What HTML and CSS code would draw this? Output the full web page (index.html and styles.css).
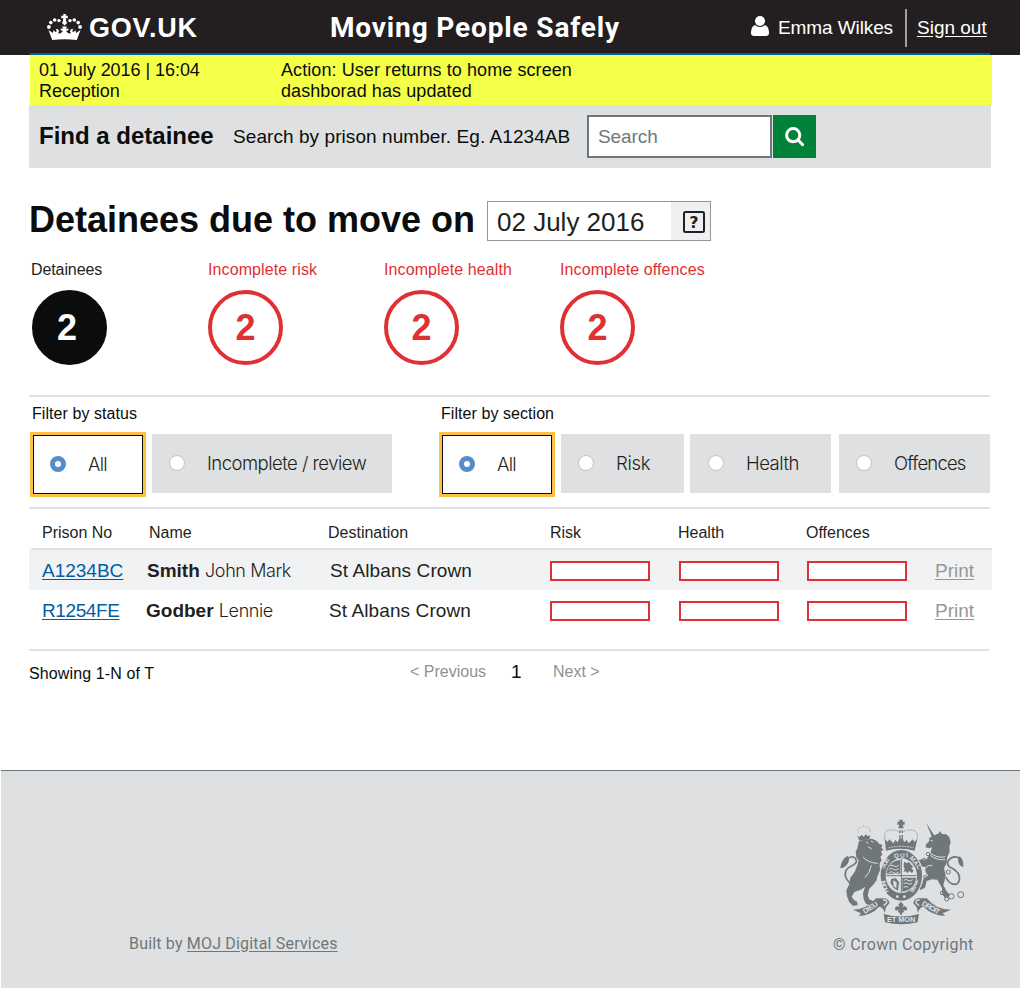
FILE: index.html
```html
<!DOCTYPE html>
<html lang="en">
<head>
<meta charset="utf-8">
<title>Moving People Safely</title>
<link rel="stylesheet" href="styles.css">
</head>
<body>
<header class="masthead">
  <svg class="crown" viewBox="0 0 35 26" width="35" height="26">
    <g fill="#fff">
      <path d="M16.300 0h2.500v1.800h2v2.400h-2l.3 2.500 1 2.300-2.500 2.500L15 9l1-2.300.3-2.500h-2V1.800h2z"/>
      <circle cx="12" cy="6.600" r="1.700"/><circle cx="23" cy="6.600" r="1.700"/>
      <circle cx="7.700" cy="6" r="1.800"/><circle cx="27.300" cy="6" r="1.800"/>
      <circle cx="3.800" cy="8.600" r="1.800"/><circle cx="31.200" cy="8.600" r="1.800"/>
      <circle cx="1.900" cy="13" r="1.900"/><circle cx="33.100" cy="13" r="1.900"/>
      <path d="M1.500 16l4.300 3 .8-2.800 2.200 2.100 1-1.200-1.200-2.300 2.900.6.400 2.300-1 1.900 2.900-.4 2.200-2.200-2.400-.8v-1.800l2.200.6-.6-2.600h4.600l-.6 2.600 2.200-.6v1.800l-2.400.8 2.200 2.200 2.900.4-1-1.900.4-2.300 2.900-.6-1.200 2.300 1 1.200 2.200-2.100.8 2.800 4.300-3-3.700 10q-12.300-1.400-24.600 0z"/>
    </g>
  </svg>
  <span class="govuk">GOV.UK</span>
  <span class="service">Moving People Safely</span>
  <svg class="user-icon" viewBox="0 0 18 20" width="18" height="20"><circle cx="9" cy="5" r="5" fill="#fff"/><path d="M4 9q5 4 10 0 4 1.500 4 8 0 3-3 3H3q-3 0-3-3 0-6.500 4-8z" fill="#fff"/></svg>
  <span class="user-name">Emma Wilkes</span>
  <a class="sign-out" href="#">Sign out</a>
</header>

<div class="notice">
  <p class="notice-when">01 July 2016 | 16:04<br>Reception</p>
  <p class="notice-action">Action: User returns to home screen<br>dashborad has updated</p>
</div>

<form class="find">
  <h2 class="find-title">Find a detainee</h2>
  <span class="find-hint">Search by prison number. Eg. A1234AB</span>
  <span class="find-input">Search</span>
  <span class="find-button"><svg viewBox="0 0 20 20" width="20" height="20" fill="none" stroke="#fff"><circle cx="8.200" cy="8.200" r="6.600" stroke-width="3"/><path d="M13 13l4.600 4.600" stroke-width="3" stroke-linecap="round"/></svg></span>
</form>

<main class="content">
  <div class="heading">
    <h1 class="title">Detainees due to move on</h1>
    <div class="date"><span class="date-value">02 July 2016</span><span class="date-toggle">
      <svg viewBox="0 0 22 22" width="22" height="22"><rect x="1" y="1" width="20" height="20" rx="1.500" fill="none" stroke="#231f20" stroke-width="2"/><text x="11" y="16.500" text-anchor="middle" class="date-glyph">?</text></svg>
    </span></div>
  </div>

  <div class="stats">
    <div class="stat stat-total"><span class="stat-label">Detainees</span><span class="stat-number">2</span></div>
    <div class="stat"><span class="stat-label">Incomplete risk</span><span class="stat-number">2</span></div>
    <div class="stat"><span class="stat-label">Incomplete health</span><span class="stat-number">2</span></div>
    <div class="stat"><span class="stat-label">Incomplete offences</span><span class="stat-number">2</span></div>
  </div>

  <div class="filters">
    <div class="filter filter-status">
      <span class="filter-label">Filter by status</span>
      <div class="options">
        <span class="option selected"><i class="radio"></i>All</span>
        <span class="option wide"><i class="radio"></i>Incomplete / review</span>
      </div>
    </div>
    <div class="filter">
      <span class="filter-label">Filter by section</span>
      <div class="options">
        <span class="option selected"><i class="radio"></i>All</span>
        <span class="option risk"><i class="radio"></i>Risk</span>
        <span class="option health"><i class="radio"></i>Health</span>
        <span class="option offences"><i class="radio"></i>Offences</span>
      </div>
    </div>
  </div>

  <div class="table">
    <div class="row head"><span>Prison No</span><span class="head-name">Name</span><span>Destination</span><span>Risk</span><span>Health</span><span>Offences</span></div>
    <div class="row shaded"><a href="#" class="number">A1234BC</a><span class="name"><b>Smith</b> <span class="light">John Mark</span></span><span class="dest">St Albans Crown</span><i class="bar"></i><i class="bar"></i><i class="bar"></i><a href="#" class="print">Print</a></div>
    <div class="row plain"><a href="#" class="number">R1254FE</a><span class="name"><b>Godber</b> <span class="light">Lennie</span></span><span class="dest">St Albans Crown</span><i class="bar"></i><i class="bar"></i><i class="bar"></i><a href="#" class="print">Print</a></div>
  </div>

  <div class="pager">
    <span class="showing">Showing 1-N of T</span>
    <span class="previous">&lt; Previous</span>
    <span class="page">1</span>
    <span class="next">Next &gt;</span>
  </div>
</main>

<footer class="footer">
  <p class="built">Built by <a href="#">MOJ Digital Services</a></p>
  <div class="copyright">
    <svg class="crest" viewBox="0 0 390 336" width="130" height="112">
      <!-- central crown -->
      <g fill="#6f777b">
        <path d="M184 14h10v6h6v9h-6l3 11h-16l3-11h-6v-9h6zM184 46h4v8h-4zM191 46h4v8h-4zM184 60h4v14h-4zM191 60h4v14h-4z"/>
        <path d="M140 72l9 9 5-8 8 8 4 4 6-10 7 7 5-11h10l5 11 7-7 6 10 4-4 8-8 5 8 9-9-8 35q-45-12-86 0z"/>
      </g>
      <g fill="none" stroke="#6f777b" stroke-width="3" stroke-dasharray="3 4">
        <path d="M141 72q-6-26 18-27 18-1 26 8M237 72q6-26-18-27-18-1-26 8"/>
        <path d="M62 53q-6-14 8-16l7-5 7 4q13 0 12 14" stroke-width="2"/>
      </g>
      <path d="M152 98q37-8 74 0" fill="none" stroke="#dee0e2" stroke-width="3" stroke-dasharray="5 3"/>

      <!-- supporters -->
      <g fill="#6f777b">
        <path d="M58 62l7 4 6-7 6 6 7-7 5 6 8-3-3 12-30 4z"/>
        <path d="M62 80l14-5 26-4 13 6 9 10 10 3-4 8 7 7-8 4 4 10-6 6 4 11-6 9 1 20-8 20-2 10-10 14-12 12-5 20 5 12 12 6 4 10-12 2-14-4-7-14-2-18 6-19-13 8-19 7-8 14 7 10 10 6 1 10-14 1-11-10-7-18-2-18 8-16 4-22 13-17 8-20 4-15-7-9-2-15 5-12z"/>
        <path d="M30 122q-21 9-23 38 18-3 25-20l1-8zM363 124q15 7 13 33-14-4-16-22z"/>
        <path d="M265 25l25 38-7 6z"/>
        <path d="M274 68l17-8 12-6 4-6 4 9 14 1 9 9 4 14-4 15 1 15-7 14-2 18-8 17 5 20-3 16-4 14 9 18 9 10-1 7-13 3-7-10-1-18-14-26-16-1-16 5-5 20-14 7-6-5 11-12 5-18 14-8-8-10-2-16-12-2-10 8-8-8-8-7 9-2 7-9 12-3 13 2 13-20 5-18-9 3-10-3 1-9 10-10z"/>
      </g>
      <g fill="none" stroke="#6f777b" stroke-linecap="round">
        <path d="M36 204Q16 187 24 166q5-9 18-14 19-9 11-21-11-13-26 3" stroke-width="5"/>
        <path d="M324 188q14 26 34 18 12-13 2-32-10-12-25-18-11-9-3-20 12-16 31-7" stroke-width="5"/>
      </g>
      <g fill="none" stroke="#dee0e2" stroke-linecap="round" stroke-width="3">
        <path d="M85 81l5 4M100 79l5 2M91 96l9 5M76 127q15 17 42 18M100 152q-5 23-18 35M279 76l4 1M276 114q20 16 44 12M278 122q20 15 42 12M262 160q9-13 20-8"/>
      </g>
      <g fill="none" stroke="#6f777b" stroke-width="3">
        <circle cx="270" cy="117" r="5"/><circle cx="258" cy="135" r="5"/><circle cx="275" cy="162" r="6"/><circle cx="262" cy="186" r="5"/>
        <circle cx="331" cy="171" r="6" fill="#dee0e2"/><circle cx="312" cy="234" r="5"/><circle cx="326" cy="252" r="6"/><circle cx="340" cy="244" r="8"/><circle cx="368" cy="239" r="9"/>
      </g>

      <!-- garter and shield -->
      <ellipse cx="190" cy="181" rx="65" ry="79" fill="#dee0e2"/>
      <ellipse cx="190" cy="181" rx="62" ry="76" fill="#6f777b"/>
      <g class="garter-text">
        <text x="137" y="163" textLength="37" transform="rotate(-58 137 163)">SOIT</text>
        <text x="168" y="129" textLength="42" transform="rotate(-3 168 129)">QUI</text>
        <text x="214" y="129" textLength="44" transform="rotate(52 214 129)">MAL</text>
        <text x="152" y="231" textLength="38" transform="rotate(-108 152 231)">HONI</text>
        <text x="228" y="233" textLength="42" transform="rotate(-72 228 233)">PENSE</text>
      </g>
      <ellipse cx="190" cy="182" rx="47" ry="52" fill="#dee0e2"/>
      <path d="M146 176q3-37 41-41v41zM193 188h41q-3 36-41 42z" fill="#6f777b"/>
      <path d="M155 153q7-6 13 0t14-2M153 163q8-6 14 0t15-2M153 173q8-6 14 0t15-2M197 196q7-5 13 0t14-2M197 206q7-5 13 0t12-2M197 217q7-5 13 0" fill="none" stroke="#dee0e2" stroke-width="3"/>
      <path d="M190 132v101M145 182h90" stroke="#6f777b" stroke-width="3"/>
      <path d="M198 140l8 5 8-4 5 8 7 5-6 6 7 7-5 7-8-6-6 7-5-7-7 4 4-10-3-8z" fill="#6f777b"/>
      <path d="M160 191l14-1 9 12-3 25-13-8-10-16zm5 5l2 18 8 6 1-18z" fill="#6f777b" fill-rule="evenodd"/>
      <circle cx="178" cy="245" r="4" fill="#dee0e2"/><circle cx="199" cy="245" r="4" fill="#dee0e2"/>

      <!-- fleur and motto ribbon -->
      <path d="M189 260l8 9-3 8 6-4 8 6-3 8-9-2 2 6-6 3v5h-6v-5l-6-3 2-6-9 2-3-8 8-6 6 4-3-8z" fill="#6f777b"/>
      <path d="M45 284q19 0 38-9 17-8 31-25l25 0q15 3 15 15l-10 12-4 17q-4-18-17-19-22 26-61 28l7-8zM339 284q-22 0-42-9-17-8-31-25l-25 0q-15 3-15 15l10 12 4 17q4-18 17-19 24 26 65 28l-8-8z" fill="#6f777b"/>
      <path d="M135 255q14-1 11 8l-9 9M245 255q-14-1-11 8l9 9" fill="none" stroke="#dee0e2" stroke-width="4"/>
      <path d="M137 297q53 15 106 0l-4 25q-49 12-98 0z" fill="#6f777b"/>
      <g class="motto">
        <text x="80" y="297" textLength="49" transform="rotate(-32 80 297)">DIEU</text>
        <text x="147" y="321" textLength="85">ET MON</text>
        <text x="250" y="270" textLength="58" transform="rotate(29 250 270)">DROIT</text>
      </g>
    </svg>
    <span class="copyright-text">© Crown Copyright</span>
  </div>
</footer>
</body>
</html>
```
FILE: styles.css
```css
* { box-sizing: border-box; }

body {
  margin: 0;
  width: 1020px;
  height: 988px;
  background: #fff;
  color: #0b0c0c;
  font-family: "Liberation Sans", Arial, sans-serif;
  font-size: 16px;
  display: flex;
  flex-direction: column;
}

p, h1, h2 { margin: 0; }

.masthead {
  height: 55px;
  flex: none;
  display: flex;
  align-items: center;
  padding: 0 32px 0 47px;
  background: linear-gradient(#005ea5, #005ea5) 30px 53px / 960px 2px no-repeat #231f20;
  color: #fff;
  font-size: 19px;
}
.crown { margin-top: -2px; }
.govuk { margin-left: 7px; padding-top: 1px; width: 110px; font-size: 27px; font-weight: bold; letter-spacing: .8px; }
.service { margin-left: 131px; width: 421px; font: bold 28px Roboto, sans-serif; letter-spacing: .85px; }
.user-icon { margin-top: -3px; }
.user-name { margin-left: 9px; width: 127px; white-space: nowrap; letter-spacing: -.1px; }
.sign-out {
  height: 38px;
  line-height: 38px;
  padding-left: 10px;
  border-left: 2px solid #a2a0a1;
  color: #fff;
  white-space: nowrap;
  text-underline-offset: 2px;
}

.notice {
  height: 50px;
  flex: none;
  display: flex;
  width: 962px;
  margin-left: 30px;
  padding: 5px 9px 0;
  background: #f4ff47;
  font-size: 18px;
  line-height: 21px;
}
.notice-when { width: 242px; letter-spacing: -.05px; }
.notice-action { letter-spacing: .08px; }

.find {
  height: 63px;
  flex: none;
  display: flex;
  align-items: center;
  width: 962px;
  margin-left: 29px;
  padding-left: 10px;
  background: #dee0e2;
}
.find-title { width: 194px; margin-top: -2px; font-size: 24px; }
.find-hint { width: 354px; font-size: 19px; white-space: nowrap; letter-spacing: .07px; }
.find-input {
  width: 185px;
  height: 43px;
  padding-left: 9px;
  border: 2px solid #6f777b;
  background: #fff;
  color: #6f777b;
  font-size: 19px;
  line-height: 39px;
  letter-spacing: -.1px;
}
.find-button {
  display: grid;
  place-items: center;
  width: 43px;
  height: 43px;
  margin-left: 1px;
  background: #00823b;
}

.content { flex: none; width: 963px; height: 602px; margin-left: 29px; padding-top: 33px; }

.heading { display: flex; height: 40px; }
.title { width: 458px; font-size: 36px; line-height: 37px; white-space: nowrap; }
.date { display: flex; width: 224px; height: 40px; border: 1px solid #979797; color: #231f20; font-size: 26px; line-height: 41px; }
.date-value { width: 183px; padding-left: 9px; }
.date-toggle { flex: 1; display: grid; place-items: center; padding: 2px 0 0 6px; background: #eeeff0; }
.date-glyph { font: bold 16px "DejaVu Sans", sans-serif; fill: #231f20; }

.stats { display: flex; margin: 19px 0 0 3px; height: 134px; color: #df3034; }
.stat { width: 176px; }
.stat-label { display: block; height: 30px; line-height: 19px; white-space: nowrap; letter-spacing: .1px; }
.stat-number {
  display: block;
  width: 75px;
  height: 75px;
  border: 4px solid #df3034;
  border-radius: 50%;
  font-size: 36px;
  font-weight: bold;
  line-height: 67px;
  text-align: center;
}
.stat-total .stat-label { color: #231f20; margin-left: -1px; letter-spacing: -.1px; }
.stat-total .stat-number { background: #0b0c0c; border-color: #0b0c0c; color: #fff; padding-right: 5px; }

.filters {
  display: flex;
  width: 961px;
  height: 114px;
  margin-top: 1px;
  padding-left: 1px;
  border: solid #dee0e2;
  border-width: 2px 0;
}
.filter-status { width: 409px; }
.filter-label { display: block; height: 35px; padding: 8px 0 0 2px; line-height: 18px; letter-spacing: .06px; }
.options { display: flex; align-items: flex-start; height: 65px; }
.option {
  display: flex;
  align-items: center;
  flex: none;
  height: 59px;
  margin-top: 2px;
  padding: 0 0 1px 17px;
  background: #dee0e2;
  color: #231f20;
  font: 300 18.5px Inter, "Liberation Sans", sans-serif;
  letter-spacing: -.8px;
  white-space: nowrap;
}
.option.selected { width: 116px; height: 65px; margin: 0 6px 0 0; padding-left: 17px; border: 3px solid #ffbf47; background: #fff; outline: 1px solid #0b0c0c; outline-offset: -4px; }
.option.wide { width: 240px; letter-spacing: -.52px; }
.option.risk { width: 123px; letter-spacing: -.3px; }
.option.health { width: 141px; margin-left: 6px; padding-left: 18px; letter-spacing: -.5px; }
.option.offences { width: 151px; margin-left: 8px; }
.radio { width: 16px; height: 16px; margin: 0 22px 0 0; border: 1px solid #c3c4c6; border-radius: 50%; background: #fff; }
.selected .radio { border: 5px solid #568dc9; }

.row { display: grid; grid-template-columns: 105px 183px 220px 129px 128px 128px 1fr; align-items: center; height: 40px; padding: 2px 0 0 13px; font-size: 19px; color: #231f20; white-space: nowrap; }
.row.head { height: 41px; grid-template-columns: 107px 179px 222px 128px 128px 1fr; margin-left: 2px; padding: 8px 0 0 11px; font-size: 16px; border-bottom: 2px solid #dee0e2; }
.row.shaded { background: #f1f2f4; }
.row.plain .dest, .row.plain .name { margin-left: -1px; }
.row.plain .number { letter-spacing: -.4px; }
.dest { letter-spacing: .1px; }
.number { color: #005ea5; text-underline-offset: 2px; }
.light { font: 300 18px Inter, "Liberation Sans", sans-serif; letter-spacing: -.4px; }
.bar { width: 100px; height: 20px; border: 2px solid #df3034; background: #fff; }
.print { color: #979797; text-underline-offset: 2px; }

.pager { display: flex; width: 960px; margin-top: 19px; padding-top: 11px; border-top: 2px solid #dee0e2; line-height: 20px; white-space: nowrap; color: #8f9193; }
.showing { width: 381px; color: #0b0c0c; padding-top: 2px; letter-spacing: .12px; }
.previous { width: 101px; }
.page { width: 42px; color: #0b0c0c; font-size: 19px; }

.footer {
  flex: none;
  height: 218px;
  display: flex;
  justify-content: space-between;
  align-items: flex-start;
  margin-left: 1px;
  padding: 44px 45px 0 128px;
  border-top: 1px solid #6f777b;
  background: #dee0e2;
  color: #6f777b;
  font: 16px Roboto, sans-serif;
  letter-spacing: .18px;
}
.built { margin-top: 119px; line-height: 20px; }
.footer a { color: #6f777b; text-underline-offset: 2px; }
.copyright { display: flex; flex-direction: column; width: 142px; }
.crest { flex: none; margin-left: 5px; }
.copyright-text { margin: 8px 0 0 0; line-height: 20px; white-space: nowrap; letter-spacing: .36px; }
.motto { font: bold 22px "Liberation Sans", sans-serif; letter-spacing: 0; fill: #dee0e2; }
.garter-text { font: bold 19px "Liberation Sans", sans-serif; letter-spacing: 0; fill: #dee0e2; }
```
